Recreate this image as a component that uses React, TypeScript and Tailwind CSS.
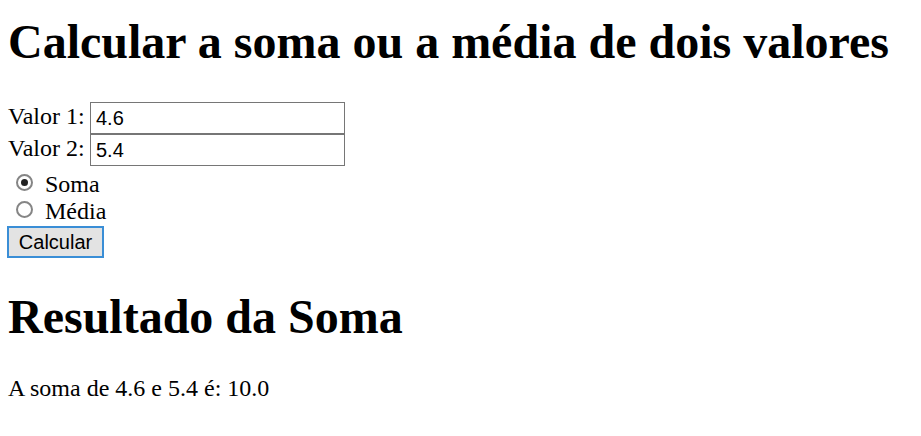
import { useState } from "react";

function Radio({ checked, label, onClick }: { checked: boolean; label: string; onClick: () => void }) {
  return (
    <div className="flex h-[27px] items-start cursor-default" onClick={onClick}>
      <span className="ml-[8px] mt-[3px] flex h-[17px] w-[17px] items-center justify-center rounded-full border-2 border-[#858585] bg-white">
        {checked && <span className="h-[7px] w-[7px] rounded-full bg-[#222222]" />}
      </span>
      <span className="ml-[12px] leading-[27px]">{label}</span>
    </div>
  );
}

export default function App() {
  const [op, setOp] = useState("soma");

  return (
    <div className="min-h-[436px] bg-white pl-[8px] font-['Liberation_Serif','Times_New_Roman',serif] text-[24px] text-black">
      <h1 className="mt-[14px] text-[48px] font-bold leading-[56px]">
        Calcular a soma ou a média de dois valores
      </h1>

      <div className="mt-[32px] flex h-[32px] items-start">
        <label className="w-[82px] leading-[28px]">Valor 1:</label>
        <input
          defaultValue="4.6"
          className="h-[32px] w-[255px] border border-[#767676] bg-white px-[5px] font-['Liberation_Sans',Arial,sans-serif] text-[20px] text-black outline-none"
        />
      </div>
      <div className="flex h-[32px] items-start">
        <label className="w-[82px] leading-[28px]">Valor 2:</label>
        <input
          defaultValue="5.4"
          className="h-[32px] w-[255px] border border-[#767676] bg-white px-[5px] font-['Liberation_Sans',Arial,sans-serif] text-[20px] text-black outline-none"
        />
      </div>

      <div className="mt-[5px]">
        <Radio checked={op === "soma"} label="Soma" onClick={() => setOp("soma")} />
        <Radio checked={op === "media"} label="Média" onClick={() => setOp("media")} />
      </div>

      <button className="-ml-[1px] mt-[1px] flex h-[32px] w-[97px] items-center justify-center border-2 border-[#3a8ed6] bg-[#e3e3e3] font-['Liberation_Sans',Arial,sans-serif] text-[20px] text-black">
        Calcular
      </button>

      <h2 className="mt-[31px] text-[48px] font-bold leading-[56px]">Resultado da Soma</h2>

      <p className="mt-[30px] leading-[27px]">A soma de 4.6 e 5.4 é: 10.0</p>
    </div>
  );
}
